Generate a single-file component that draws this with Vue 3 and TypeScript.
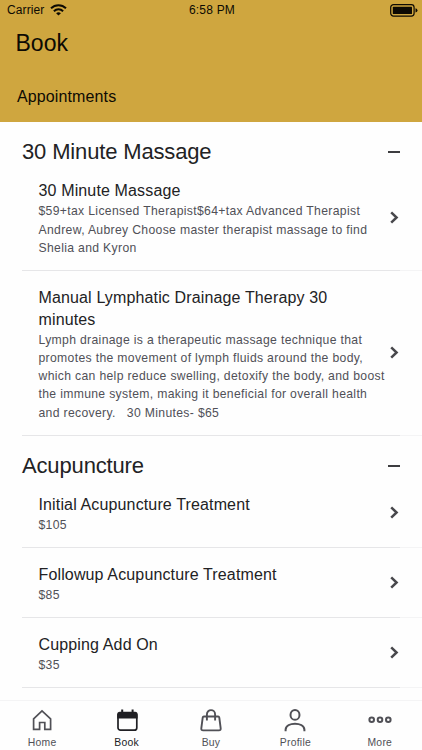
<script setup lang="ts">
interface Service {
  name: string
  detail: string[]
}
interface Group {
  title: string
  services: Service[]
}

const groups: Group[] = [
  {
    title: '30 Minute Massage',
    services: [
      {
        name: '30 Minute Massage',
        detail: [
          '$59+tax Licensed Therapist$64+tax Advanced Therapist',
          'Andrew, Aubrey Choose master therapist massage to find',
          'Shelia and Kyron',
        ],
      },
      {
        name: 'Manual Lymphatic Drainage Therapy 30 minutes',
        detail: [
          'Lymph drainage is a therapeutic massage technique that',
          'promotes the movement of lymph fluids around the body,',
          'which can help reduce swelling, detoxify the body, and boost',
          'the immune system, making it beneficial for overall health',
          'and recovery.\u00a0\u00a0 30 Minutes- $65',
        ],
      },
    ],
  },
  {
    title: 'Acupuncture',
    services: [
      { name: 'Initial Acupuncture Treatment', detail: ['$105'] },
      { name: 'Followup Acupuncture Treatment', detail: ['$85'] },
      { name: 'Cupping Add On', detail: ['$35'] },
    ],
  },
]

const tabs: string[] = ['Home', 'Book', 'Buy', 'Profile', 'More']
const activeTab = 'Book'
</script>

<template>
  <div class="screen">
    <header class="header">
      <div class="status">
        <div class="carrier">
          <span>Carrier</span>
          <svg class="wifi" width="17" height="12" viewBox="0 0 17 12" fill="none" stroke="#0d0a03" stroke-width="2">
            <path d="M1 4.3C5.2.2 11.8 .2 16 4.3" />
            <path d="M3.9 7.2C6.5 4.7 10.5 4.7 13.1 7.2" />
            <path d="M6.1 9.2Q8.5 7.2 10.9 9.2L8.5 11.6Z" fill="#0d0a03" stroke="none" />
          </svg>
        </div>
        <span class="clock">6:58 PM</span>
        <div class="power">
          <svg width="28" height="13" viewBox="0 0 28 13">
            <rect x=".7" y=".7" width="23.4" height="11.4" rx="2.8" fill="none" stroke="#0d0a03" stroke-width="1.2" />
            <rect x="2.8" y="2.8" width="19.2" height="7.2" rx=".6" fill="#0d0a03" />
            <path d="M25.5 4.2Q27.5 4.8 27.5 6.4T25.5 8.6Z" fill="#0d0a03" />
          </svg>
        </div>
      </div>
      <h1>Book</h1>
      <div class="subtab">Appointments</div>
    </header>

    <main class="content">
      <section v-for="group in groups" :key="group.title">
        <div class="group-head">
          <h2>{{ group.title }}</h2>
          <span class="minus"></span>
        </div>
        <div v-for="service in group.services" :key="service.name" class="row">
          <div class="row-main">
            <div class="row-text">
              <h3>{{ service.name }}</h3>
              <p v-for="line in service.detail" :key="line">{{ line }}</p>
            </div>
            <svg class="chevron" width="9" height="13" viewBox="0 0 9 13" fill="none" stroke="#48484c" stroke-width="2.5">
              <path d="M1.2 1.3L6.6 6.5L1.2 11.7" />
            </svg>
          </div>
          <div class="rule"></div>
        </div>
      </section>
    </main>

    <nav class="tabs">
      <div v-for="tab in tabs" :key="tab" class="tab" :class="{ active: tab === activeTab }">
        <svg width="26" height="24" viewBox="0 0 26 24" fill="none" stroke="currentColor" stroke-width="1.7">
          <path v-if="tab === 'Home'" d="M4.6 9.9L13 1.8L21.6 9.9V20.3H15.8V13.5H10.6V20.3H4.6Z" />
          <g v-else-if="tab === 'Book'">
            <rect x="4" y="4" width="18.8" height="17.2" rx="2.5" />
            <path d="M3.2 9.6V5.2Q3.2 2.7 5.7 2.7H21.1Q23.6 2.7 23.6 5.2V9.6Z" fill="currentColor" stroke="none" />
            <path d="M8.2 .6V4M18.6 .6V4" stroke-width="2" />
          </g>
          <g v-else-if="tab === 'Buy'" stroke-width="1.9">
            <path d="M5.9 7.5H20.1Q21.1 7.5 21.3 8.6L22.7 19.4Q22.9 21.4 20.9 21.4H5.1Q3.1 21.4 3.3 19.4L4.7 8.6Q4.9 7.5 5.9 7.5Z" />
            <path d="M8.9 11.6V5.4C8.9 -.3 17.1 -.3 17.1 5.4V11.6" />
          </g>
          <g v-else-if="tab === 'Profile'" stroke-width="2">
            <ellipse cx="13" cy="5.9" rx="4.5" ry="4.9" />
            <path d="M3.6 22.2V20.6C4.3 12.8 21.7 12.8 22.4 20.6V22.2" />
          </g>
          <g v-else stroke-width="2">
            <circle cx="4.7" cy="10.8" r="2.3" />
            <circle cx="13" cy="10.8" r="2.3" />
            <circle cx="21.3" cy="10.8" r="2.3" />
          </g>
        </svg>
        <span>{{ tab }}</span>
      </div>
    </nav>
  </div>
</template>

<style>
body {
  margin: 0;
  background: #fff;
}
</style>

<style scoped>
.screen {
  display: flex;
  flex-direction: column;
  height: 750px;
  overflow: hidden;
  background: #fefefe;
  color: #222224;
  font-family: "Liberation Sans", Arial, sans-serif;
}
h1, h2, h3, p {
  margin: 0;
  font-weight: 400;
}
.header {
  flex: none;
  box-sizing: border-box;
  height: 122px;
  background: #cfa63f;
  color: #0d0a03;
}
.status {
  display: grid;
  grid-template-columns: 1fr auto 1fr;
  align-items: center;
  height: 19px;
  padding: 0 4px 0 7px;
  font-size: 12px;
}
.carrier {
  display: flex;
  align-items: center;
  gap: 6px;
  letter-spacing: 0.1px;
}
.clock {
  margin-right: 1px;
  letter-spacing: 0.2px;
}
.power {
  display: flex;
  justify-content: flex-end;
  padding-top: 1px;
}
h1 {
  padding: 10px 0 0 15.5px;
  font-size: 23px;
  line-height: 28px;
}
.subtab {
  padding: 28.5px 0 0 17px;
  font-size: 16px;
  line-height: 22px;
  letter-spacing: 0.12px;
}
.content {
  flex: 1;
  min-height: 0;
  overflow: hidden;
}
.group-head {
  display: flex;
  align-items: center;
  justify-content: space-between;
  box-sizing: border-box;
  height: 42.5px;
  padding: 18px 22px 0;
}
h2 {
  font-size: 22px;
  line-height: 24px;
  letter-spacing: -0.15px;
}
.minus {
  width: 12px;
  height: 2px;
  background: #3d3d40;
}
.row {
  padding-left: 22px;
}
.row-main {
  display: flex;
  align-items: center;
  padding: 15.9px 23.5px 12.9px 16.5px;
}
.row-text {
  flex: 1;
}
h3 {
  max-width: 310px;
  font-size: 16px;
  line-height: 22px;
  letter-spacing: 0.14px;
}
p {
  color: #505057;
  font-size: 12.2px;
  line-height: 18.2px;
  letter-spacing: 0.33px;
  white-space: nowrap;
}
.chevron {
  flex: none;
  margin-top: -3px;
}
.rule {
  height: 1px;
  background: linear-gradient(to right, #e6e6e8 378px, #f4f4f5 378px);
}
.tabs {
  display: grid;
  grid-template-columns: repeat(5, 1fr);
  flex: none;
  box-sizing: border-box;
  height: 50px;
  padding-top: 8px;
  border-top: 1px solid #f4f4f5;
  background: #fefefe;
}
.tab {
  display: flex;
  flex-direction: column;
  align-items: center;
  color: #505056;
  font-size: 10.4px;
  line-height: 12px;
  letter-spacing: 0.25px;
}
.tab span {
  margin-top: 4px;
}
.active {
  color: #202024;
}
</style>
